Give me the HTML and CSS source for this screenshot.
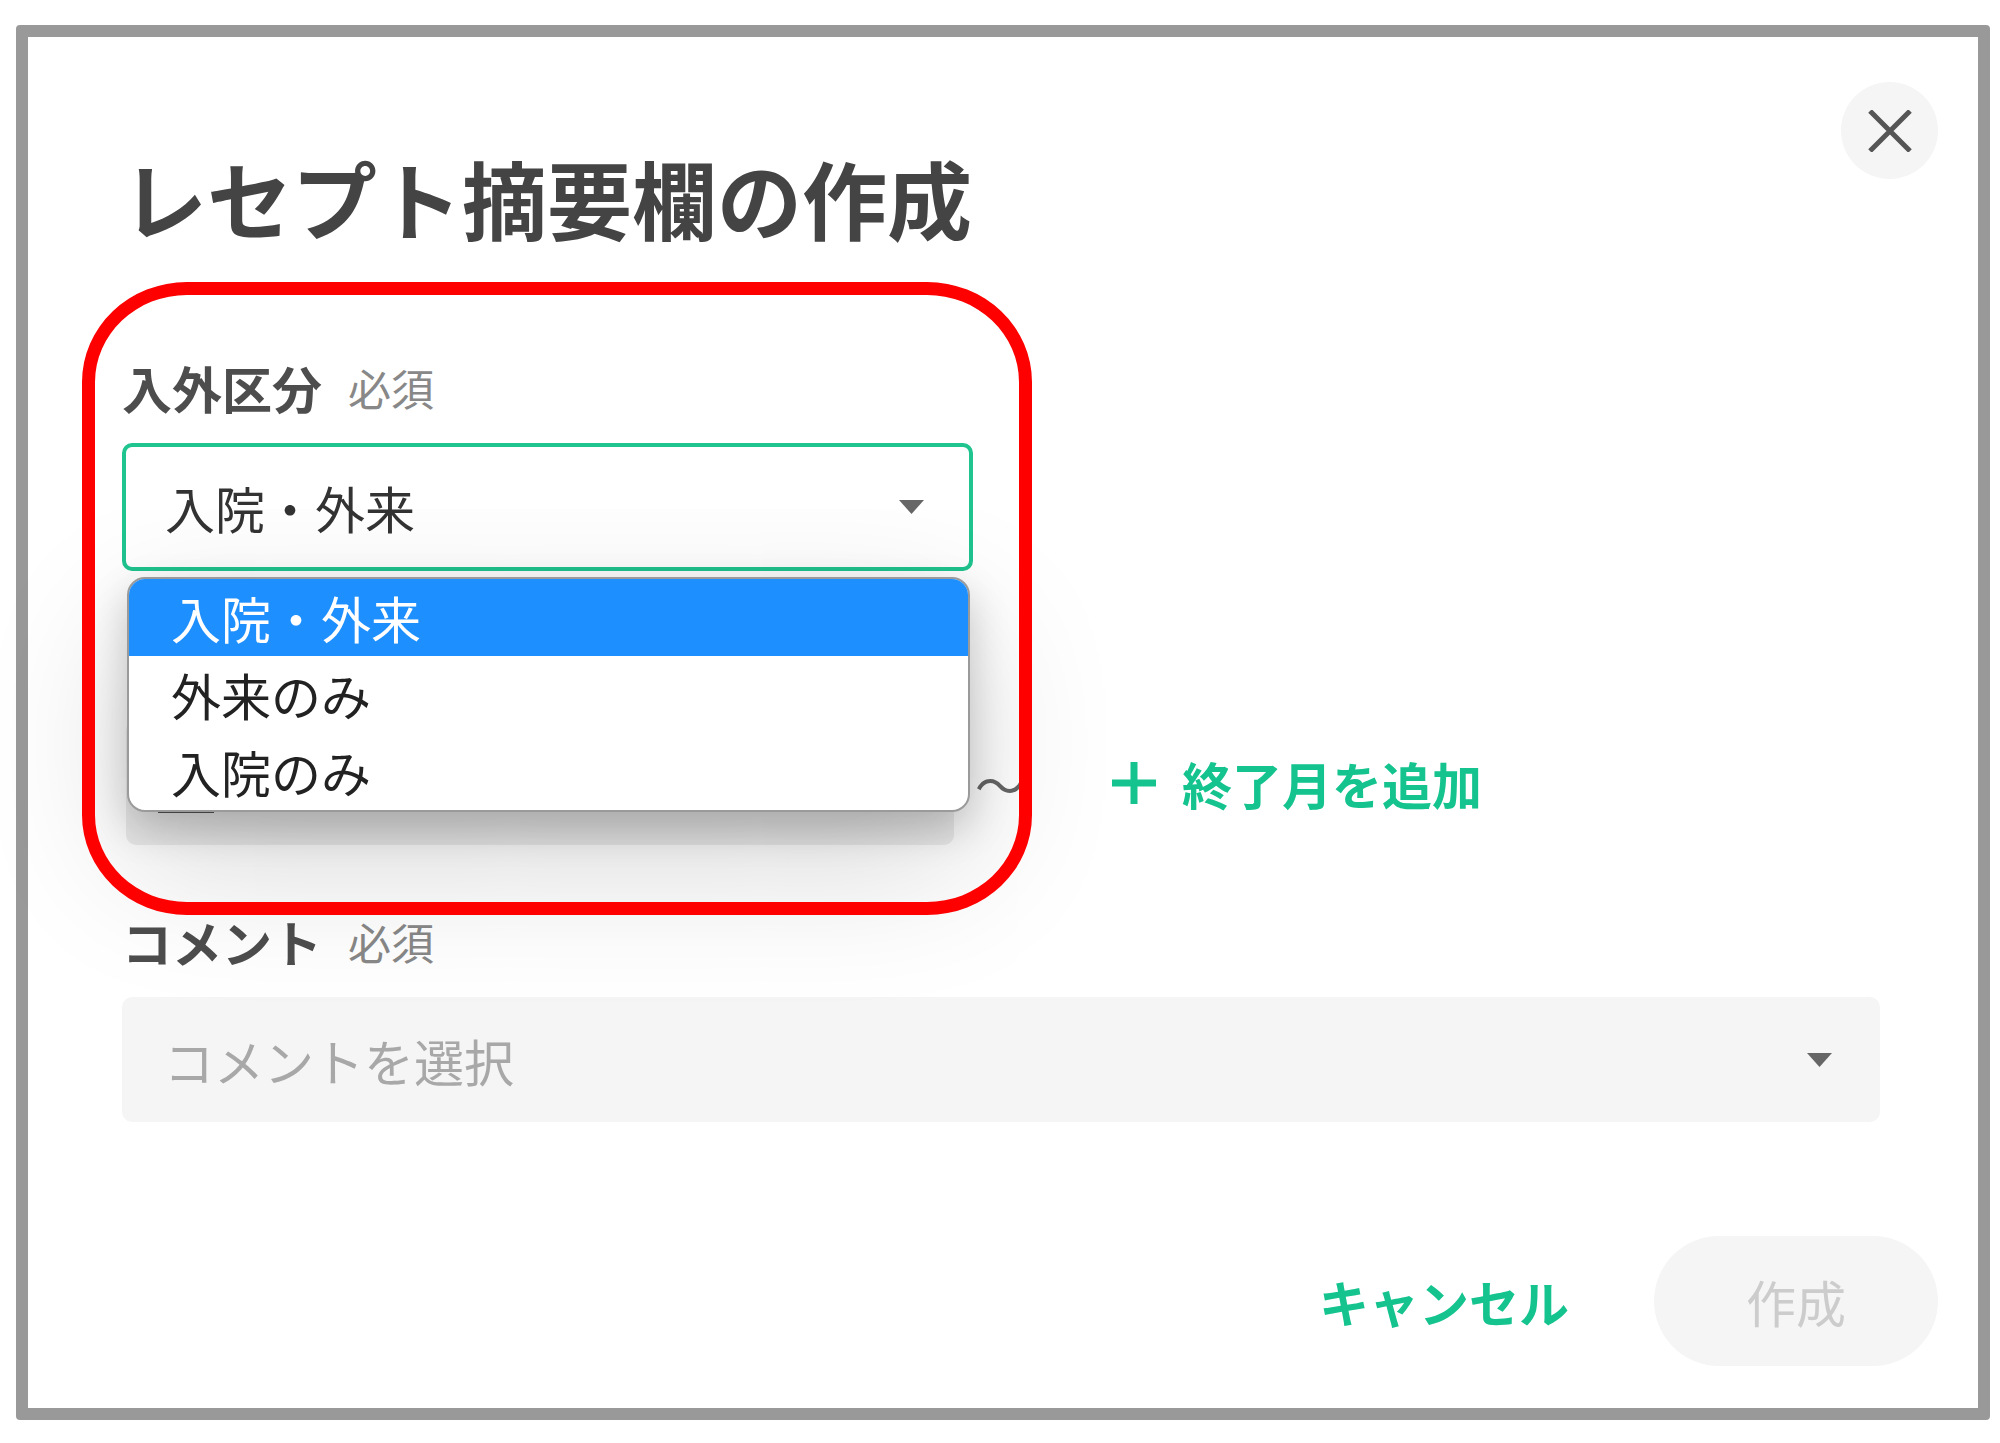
FILE: index.html
```html
<!DOCTYPE html>
<html lang="ja">
<head>
<meta charset="utf-8">
<title>レセプト摘要欄の作成</title>
<link rel="stylesheet" href="styles.css">
</head>
<body>
<div class="frame">
  <header class="dlg-header">
    <h1 class="dlg-title">レセプト摘要欄の作成</h1>
    <button class="close-btn" aria-label="閉じる">
      <svg width="44" height="42" viewBox="0 0 44 42"><path d="M2 1 L42 41 M42 1 L2 41" stroke="#555" stroke-width="5" fill="none"/></svg>
    </button>
  </header>

  <section class="field field-type">
    <div class="field-label"><span class="label-main">入外区分</span><span class="label-req">必須</span></div>
    <div class="select select-focused">
      <span class="select-value">入院・外来</span>
      <svg class="caret" width="25" height="14" viewBox="0 0 25 14"><polygon points="0,0 25,0 12.5,14" fill="#666"/></svg>
    </div>
    <ul class="dropdown">
      <li class="opt opt-selected">入院・外来</li>
      <li class="opt">外来のみ</li>
      <li class="opt">入院のみ</li>
    </ul>
  </section>

  <section class="field field-period">
    <div class="field-label label-hidden"></div>
    <div class="period-row">
      <div class="month-box"><span class="month-mark"></span></div>
      <span class="tilde">〜</span>
      <button class="add-end">
        <svg width="44" height="42" viewBox="0 0 44 42"><path d="M22 0 V42 M0 21 H44" stroke="#14c38e" stroke-width="7" fill="none"/></svg>
        <span>終了月を追加</span>
      </button>
    </div>
  </section>

  <section class="field field-comment">
    <div class="field-label"><span class="label-main">コメント</span><span class="label-req">必須</span></div>
    <div class="select select-empty">
      <span class="select-placeholder">コメントを選択</span>
      <svg class="caret" width="25" height="14" viewBox="0 0 25 14"><polygon points="0,0 25,0 12.5,14" fill="#666"/></svg>
    </div>
  </section>

  <footer class="dlg-footer">
    <button class="btn-cancel">キャンセル</button>
    <button class="btn-create" disabled>作成</button>
  </footer>

  <div class="annotation"></div>
</div>
</body>
</html>
```

FILE: styles.css
```css
* { box-sizing: border-box; }

html, body {
  margin: 0;
  padding: 0;
  background: #ffffff;
}

body {
  font-family: "Noto Sans CJK JP", "Noto Sans", sans-serif;
  color: #333;
}

.frame {
  position: relative;
  width: 1974px;
  height: 1395px;
  margin: 25px 0 0 16px;
  border: 12px solid #999999;
  border-radius: 4px;
  padding: 0 40px 0 94px;
  background: #ffffff;
}

.dlg-header {
  display: flex;
  justify-content: space-between;
  align-items: flex-start;
}

.dlg-title {
  margin: 117px 0 0 0;
  font-size: 85px;
  line-height: 1;
  letter-spacing: 0;
  font-weight: 700;
  color: #444444;
}

.close-btn {
  margin-top: 45px;
  width: 97px;
  height: 97px;
  border-radius: 50%;
  border: none;
  background: #f5f5f5;
  display: flex;
  align-items: center;
  justify-content: center;
  padding: 0;
}

.field { position: relative; }
.field-type { margin-top: 123px; }
.field-period { margin-top: 68px; }
.field-comment { margin-top: 71px; }

.field-label {
  display: flex;
  align-items: center;
  height: 50px;
}

.label-main {
  font-size: 50px;
  line-height: 1;
  font-weight: 700;
  color: #4d4d4d;
}

.label-req {
  margin-left: 26px;
  font-size: 43px;
  line-height: 1;
  color: #888888;
}

.select {
  margin-top: 31px;
  display: flex;
  align-items: center;
  justify-content: space-between;
  border-radius: 10px;
}

.select-focused {
  width: 851px;
  height: 128px;
  border: 4px solid #1fc48f;
  background: #ffffff;
  padding: 0 45px 0 39px;
}

.select-value {
  font-size: 50px;
  line-height: 1;
  color: #333333;
}

.select-empty {
  width: 1758px;
  height: 125px;
  background: #f5f5f5;
  padding: 0 48px 0 42px;
}

.select-placeholder {
  font-size: 50px;
  line-height: 1;
  color: #a8a8a8;
}

.dropdown {
  position: absolute;
  z-index: 5;
  top: calc(100% + 6px);
  left: 5px;
  width: 843px;
  margin: 0;
  padding: 0;
  list-style: none;
  background: #ffffff;
  border: 2px solid #9a9a9a;
  border-radius: 18px;
  overflow: hidden;
  box-shadow: 0 16px 40px rgba(0, 0, 0, 0.2), 0 50px 150px rgba(0, 0, 0, 0.16);
}

.opt {
  height: 77px;
  line-height: 77px;
  padding-left: 42px;
  font-size: 50px;
  color: #222222;
}

.opt-selected {
  background: #1e8fff;
  color: #ffffff;
}

.label-hidden { visibility: hidden; }

.period-row {
  margin-top: 31px;
  display: flex;
  align-items: center;
}

.month-box {
  position: relative;
  width: 828px;
  height: 125px;
  margin-left: 4px;
  background: #eeeeee;
  border-radius: 10px;
}

.month-mark {
  position: absolute;
  left: 32px;
  top: 90px;
  width: 56px;
  height: 3px;
  background: #555;
}

.tilde {
  margin-left: 21px;
  font-size: 50px;
  line-height: 1;
  color: #666666;
}

.add-end {
  margin-left: 87px;
  display: flex;
  align-items: center;
  gap: 26px;
  border: none;
  background: none;
  padding: 0;
  font-family: inherit;
  font-size: 50px;
  line-height: 1;
  font-weight: 700;
  color: #14c38e;
}

.dlg-footer {
  margin-top: 114px;
  display: flex;
  justify-content: flex-end;
  align-items: center;
}

.btn-cancel {
  margin-right: 85px;
  border: none;
  background: none;
  padding: 0;
  font-family: inherit;
  font-size: 50px;
  line-height: 1;
  font-weight: 700;
  color: #14c38e;
}

.btn-create {
  width: 284px;
  height: 130px;
  border-radius: 65px;
  border: none;
  background: #f5f5f5;
  padding: 0;
  font-family: inherit;
  font-size: 50px;
  line-height: 1;
  font-weight: 400;
  color: #cccccc;
}

.annotation {
  position: absolute;
  z-index: 10;
  left: 54px;
  top: 245px;
  width: 950px;
  height: 633px;
  border: 13px solid #ff0000;
  border-radius: 105px / 100px;
  pointer-events: none;
}
```
